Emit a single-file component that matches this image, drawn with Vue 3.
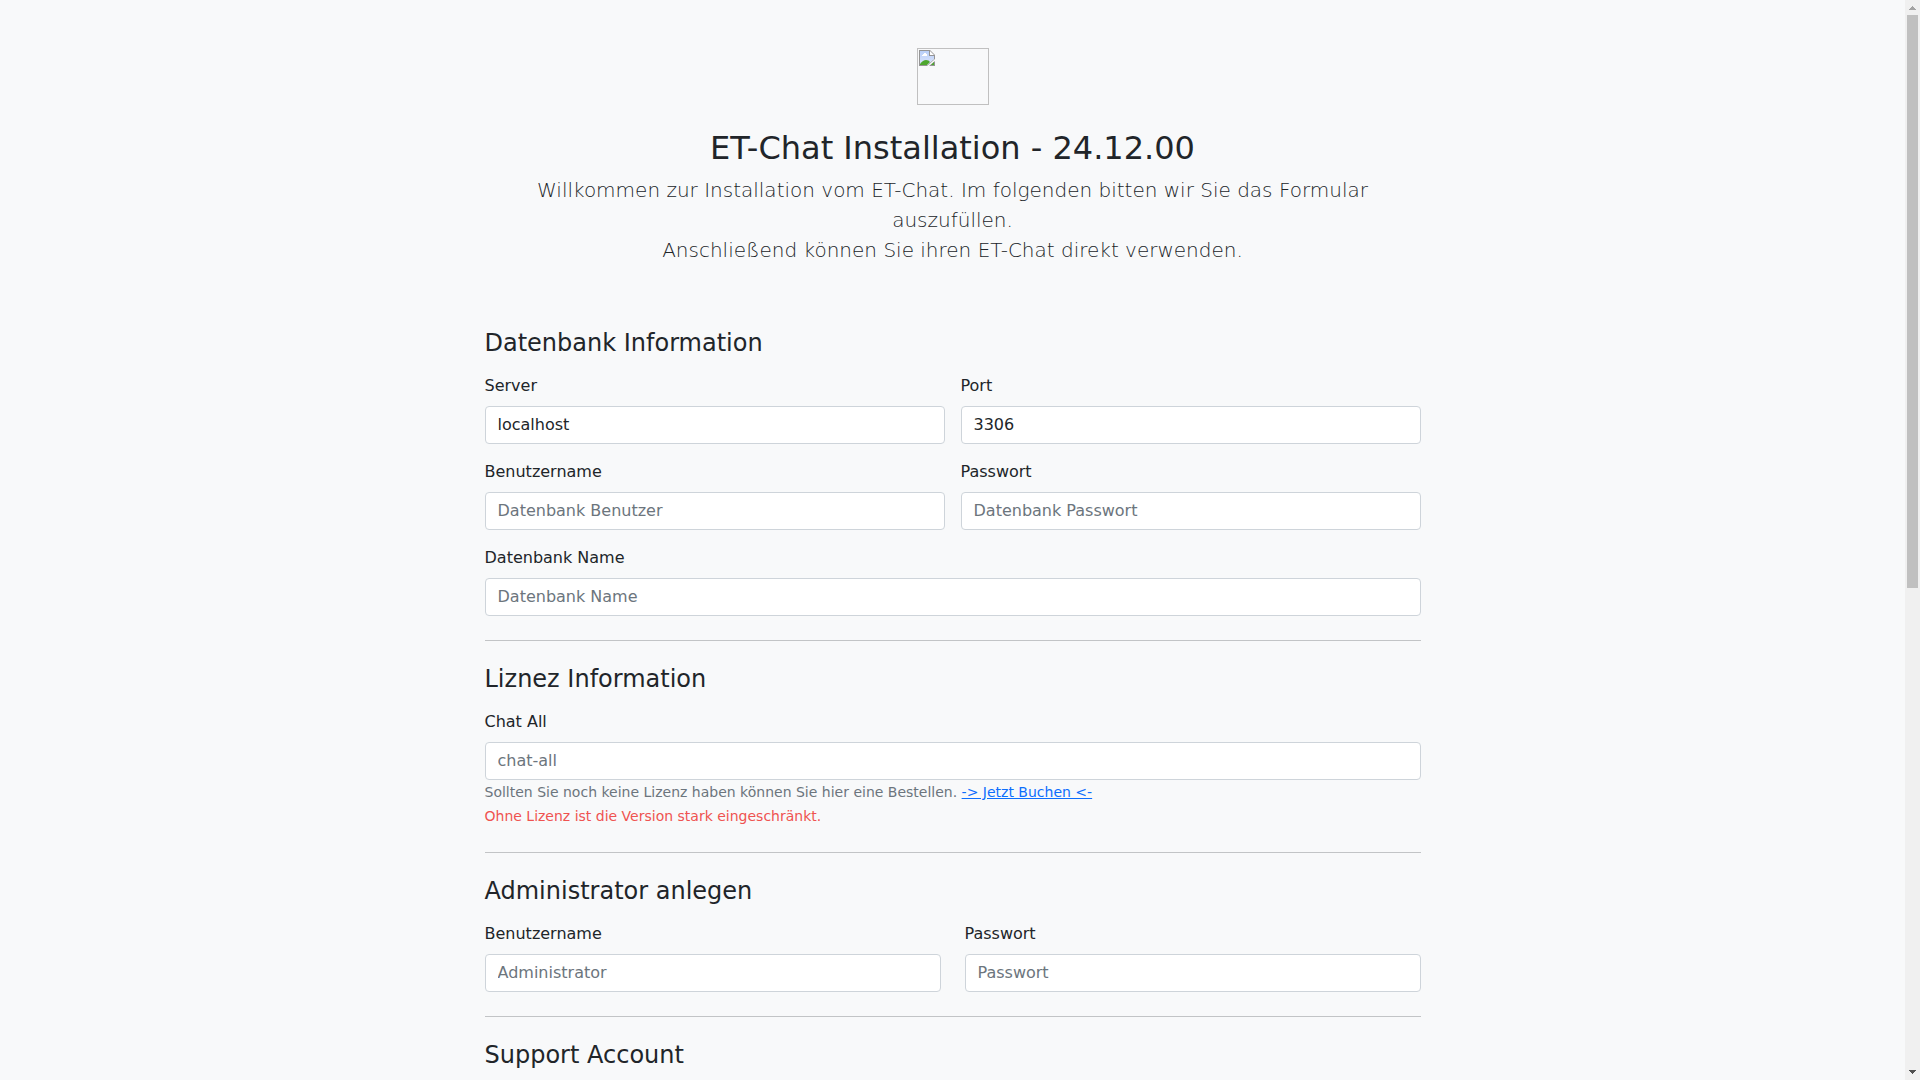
<script setup>
import { ref } from 'vue'

const sections = ref([
  {
    id: 'db',
    title: 'Datenbank Information',
    fields: [
      { id: 'db-server', label: 'Server', type: 'text', value: 'localhost' },
      { id: 'db-port', label: 'Port', type: 'text', value: '3306' },
      { id: 'db-user', label: 'Benutzername', type: 'text', value: '', placeholder: 'Datenbank Benutzer' },
      { id: 'db-pass', label: 'Passwort', type: 'password', value: '', placeholder: 'Datenbank Passwort' },
      { id: 'db-name', label: 'Datenbank Name', type: 'text', value: '', placeholder: 'Datenbank Name', full: true }
    ]
  },
  {
    id: 'licence',
    title: 'Liznez Information',
    note: true,
    fields: [
      { id: 'chat-all', label: 'Chat All', type: 'text', value: '', placeholder: 'chat-all', full: true }
    ]
  },
  {
    id: 'admin',
    title: 'Administrator anlegen',
    wide: true,
    fields: [
      { id: 'admin-user', label: 'Benutzername', type: 'text', value: '', placeholder: 'Administrator' },
      { id: 'admin-pass', label: 'Passwort', type: 'password', value: '', placeholder: 'Passwort' }
    ]
  },
  { id: 'support', title: 'Support Account', fields: [] }
])
</script>

<template>
  <div class="window">
    <div class="page">
      <main class="container">
        <header class="intro">
          <div class="logo">
            <svg width="16" height="16" viewBox="0 0 16 16" aria-hidden="true">
              <defs>
                <linearGradient id="sky" x1="0" y1="0" x2="0" y2="1">
                  <stop offset="0" stop-color="#b9cff8" />
                  <stop offset="1" stop-color="#dbe5fb" />
                </linearGradient>
              </defs>
              <path d="M0 0H11L16 5V9L8 16H0Z" fill="#959595" />
              <path d="M1 1H10V6H15V9L8 15H1Z" fill="#fff" />
              <path d="M1 1H10V6H15V9L8 15H1Z" fill="url(#sky)" />
              <path d="M3 6V5H4V4H5V3H7V4H8V6Z" fill="#fff" />
              <path d="M1 15V14Q4 10 7 10Q10 10 11 12L8 15Z" fill="#4ea72e" />
              <path d="M11 1L15 5H11Z" fill="#fff" />
              <path d="M10 1H11V5H15V6H10Z" fill="#959595" />
              <path d="M16 11V16H10Z" fill="#959595" />
              <path d="M15 12V15H12Z" fill="#4ea72e" />
            </svg>
          </div>
          <h2>ET-Chat Installation - 24.12.00</h2>
          <p class="lead">
            Willkommen zur Installation vom ET-Chat. Im folgenden bitten wir Sie das Formular auszufüllen.<br>
            Anschließend können Sie ihren ET-Chat direkt verwenden.
          </p>
        </header>

        <form @submit.prevent>
          <section v-for="section in sections" :key="section.id" class="section">
            <h4>{{ section.title }}</h4>
            <div v-if="section.fields.length" class="fields" :class="{ wide: section.wide }">
              <div v-for="field in section.fields" :key="field.id" class="field" :class="{ full: field.full }">
                <label :for="field.id">{{ field.label }}</label>
                <input :id="field.id" v-model="field.value" :type="field.type" :placeholder="field.placeholder">
              </div>
            </div>
            <div v-if="section.note" class="note">
              <p>Sollten Sie noch keine Lizenz haben können Sie hier eine Bestellen. <a href="#">-&gt; Jetzt Buchen &lt;-</a></p>
              <p class="warning">Ohne Lizenz ist die Version stark eingeschränkt.</p>
            </div>
          </section>
        </form>
      </main>
    </div>

    <div class="scrollbar" aria-hidden="true">
      <svg class="arrow up" width="15" height="15" viewBox="0 0 15 15" shape-rendering="crispEdges">
        <path d="M7 6H8V7H9V8H10V9H11V10H4V9H5V8H6V7H7Z" />
      </svg>
      <div class="track"><div class="thumb"></div></div>
      <svg class="arrow" width="15" height="15" viewBox="0 0 15 15" shape-rendering="crispEdges">
        <path d="M4 5H11V6H10V7H9V8H8V9H7V8H6V7H5V6H4Z" />
      </svg>
    </div>
  </div>
</template>

<style>
body {
  margin: 0;
  background: #f8f9fa;
}
</style>

<style scoped>
*,
*::before {
  box-sizing: border-box;
}

.window {
  display: flex;
  height: 100vh;
  overflow: hidden;
  color: #212529;
  font: 400 16px/24px "DejaVu Sans", sans-serif;
}

.page {
  flex: 1;
  min-width: 0;
  overflow: hidden;
}

.container {
  max-width: 960px;
  margin: 0 auto;
  padding: 0 12px;
}

.intro {
  padding: 48px 0;
  text-align: center;
}

.logo {
  width: 72px;
  height: 57px;
  margin: 0 auto 24px;
  padding: 1px;
  border: 1px solid #c0c0c0;
}

.logo svg {
  display: block;
}

h2,
h4,
p {
  margin: 0;
  font-weight: 400;
}

h2 {
  margin-bottom: 8px;
  font-size: 32px;
  line-height: 38px;
}

.lead {
  margin-bottom: 16px;
  font-size: 20px;
  font-weight: 300;
  line-height: 30px;
}

.section + .section {
  margin-top: 24px;
  padding-top: 24px;
  border-top: 1px solid #c2c4c6;
}

h4 {
  margin-bottom: 16px;
  font-size: 24px;
  line-height: 29px;
}

.fields {
  display: grid;
  grid-template-columns: 1fr 1fr;
  gap: 16px;
}

.fields.wide {
  column-gap: 24px;
}

.full {
  grid-column: 1 / -1;
}

label {
  display: block;
  margin-bottom: 8px;
}

input {
  display: block;
  width: 100%;
  height: 38px;
  padding: 5px 12px 7px;
  border: 1px solid #ced4da;
  border-radius: 4px;
  background: #fff;
  color: #212529;
  font: inherit;
}

input::placeholder {
  color: #6c757d;
  opacity: 1;
}

.note {
  color: #6c757d;
  font-size: 14px;
}

.note a {
  color: #0d6efd;
}

.warning {
  color: #ef5350;
}

.scrollbar {
  display: flex;
  flex-direction: column;
  width: 15px;
  background: #f0f0f0;
}

.track {
  flex: 1;
  padding: 0 2px;
}

.thumb {
  height: 54.6%;
  background: #c0c0c0;
}

.arrow {
  display: block;
  fill: #505050;
}

.arrow.up {
  fill: #a3a3a3;
}
</style>
